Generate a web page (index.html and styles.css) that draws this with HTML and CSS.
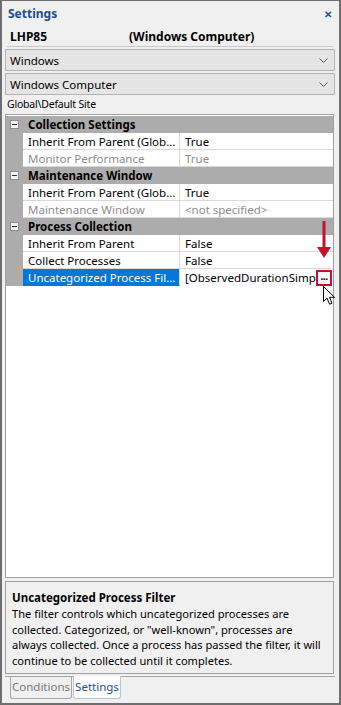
FILE: index.html
```html
<!DOCTYPE html>
<html lang="en">
<head>
  <meta charset="UTF-8" />
  <title>Settings</title>
  <link rel="stylesheet" href="styles.css">
</head>
<body>
  <div class="window">
    <div class="title-bar">
      <span class="title">Settings</span>
      <span class="close">&#x2715;</span>
    </div>

    <div class="object-row">
      <span class="object-name">LHP85</span>
      <span class="object-type">(Windows Computer)</span>
    </div>

    <div class="combo">
      <span>Windows</span>
      <svg class="chevron" width="9" height="5" viewBox="0 0 9 5"><path d="M0.5 0.5 L4.5 4.5 L8.5 0.5" fill="none" stroke="#555" stroke-width="1"/></svg>
    </div>
    <div class="combo">
      <span>Windows Computer</span>
      <svg class="chevron" width="9" height="5" viewBox="0 0 9 5"><path d="M0.5 0.5 L4.5 4.5 L8.5 0.5" fill="none" stroke="#555" stroke-width="1"/></svg>
    </div>

    <div class="site-path">Global\Default Site</div>

    <div class="prop-grid">
      <div class="category">
        <span class="toggle"></span>
        <span class="cat-name">Collection Settings</span>
      </div>
      <div class="prop">
        <span class="gutter"></span>
        <span class="name">Inherit From Parent (Glob...</span>
        <span class="value">True</span>
      </div>
      <div class="prop disabled">
        <span class="gutter"></span>
        <span class="name">Monitor Performance</span>
        <span class="value">True</span>
      </div>

      <div class="category">
        <span class="toggle"></span>
        <span class="cat-name">Maintenance Window</span>
      </div>
      <div class="prop">
        <span class="gutter"></span>
        <span class="name">Inherit From Parent (Glob...</span>
        <span class="value">True</span>
      </div>
      <div class="prop disabled">
        <span class="gutter"></span>
        <span class="name">Maintenance Window</span>
        <span class="value">&lt;not specified&gt;</span>
      </div>

      <div class="category">
        <span class="toggle"></span>
        <span class="cat-name">Process Collection</span>
      </div>
      <div class="prop">
        <span class="gutter"></span>
        <span class="name">Inherit From Parent</span>
        <span class="value">False</span>
      </div>
      <div class="prop">
        <span class="gutter"></span>
        <span class="name">Collect Processes</span>
        <span class="value">False</span>
      </div>
      <div class="prop selected">
        <span class="gutter"></span>
        <span class="name">Uncategorized Process Fil...</span>
        <span class="value">
          <span class="value-text">[ObservedDurationSimple</span>
          <span class="ellipsis-btn">...</span>
        </span>
      </div>

      <!-- callout arrow and mouse pointer drawn over the grid -->
      <svg class="callout" width="14" height="38" viewBox="0 0 14 38">
        <rect x="5.5" y="0" width="3" height="28" fill="#c8102e"/>
        <path d="M0 26 L14 26 L7 37 Z" fill="#c8102e"/>
      </svg>
      <svg class="pointer" width="13" height="19" viewBox="0 0 13 19">
        <path d="M0.5 0.5 L0.5 15.5 L4 12.2 L6.6 18.2 L9 17.2 L6.5 11.3 L11.5 11.3 Z" fill="#fff" stroke="#000" stroke-width="1" stroke-linejoin="round"/>
      </svg>
    </div>

    <div class="info">
      <div class="info-title">Uncategorized Process Filter</div>
      <p class="info-text">The filter controls which uncategorized processes are collected. Categorized, or "well-known", processes are always collected. Once a process has passed the filter, it will continue to be collected until it completes.</p>
    </div>

    <div class="tabs">
      <span class="tab">Conditions</span>
      <span class="tab active">Settings</span>
    </div>
  </div>
</body>
</html>
```

FILE: styles.css
```css
:root {
  --panel: #f0f0f0;
  --frame: #6e6e6e;
  --line: #a0a0a0;
  --cell-line: #d9d9d9;
  --cat: #acacac;
  --blue-title: #1c4f8f;
  --select: #0078d7;
  --red: #c8102e;
}
* {
  box-sizing: border-box;
}
body {
  margin: 0;
  font-family: 'Noto Sans', 'Open Sans', sans-serif;
  font-size: 11px;
  color: #000;
}
.window {
  width: 341px;
  height: 705px;
  border: 2px solid var(--frame);
  border-top-width: 1px;
  background: var(--panel);
  display: flex;
  flex-direction: column;
  padding: 0 4px 1px 3px;
}
.title-bar {
  display: flex;
  justify-content: space-between;
  align-items: center;
  height: 25px;
  padding: 0 3px 0 3px;
}
.title {
  font-weight: bold;
  font-size: 12px;
  color: var(--blue-title);
}
.close {
  font-size: 10px;
  font-weight: bold;
  color: var(--blue-title);
}
.object-row {
  display: flex;
  height: 21px;
  align-items: center;
  margin: 0 2px;
  padding-left: 3px;
  font-weight: bold;
  font-size: 12px;
  border-bottom: 1px solid #c8c8c8;
}
.object-name {
  width: 119px;
}
.combo {
  display: flex;
  justify-content: space-between;
  align-items: center;
  height: 22px;
  margin-top: 2px;
  padding: 0 6px 0 4px;
  background: #e5e5e5;
  border: 1px solid #b4b4b4;
  font-size: 11.5px;
}
.site-path {
  height: 19px;
  line-height: 19px;
  padding-left: 2px;
  font-size: 10.5px;
  letter-spacing: -0.2px;
}
.prop-grid {
  position: relative;
  flex: 1;
  background: #fff;
  border: 1px solid var(--line);
  margin-right: 1px;
  padding-top: 1px;
}
.category {
  display: flex;
  align-items: center;
  height: 17px;
  background: var(--cat);
  font-weight: bold;
  font-size: 11.5px;
}
.toggle {
  position: relative;
  width: 9px;
  height: 9px;
  margin: 0 9px 0 4px;
  background: #f4f4f4;
  border: 1px solid #8c8c8c;
}
.toggle::after {
  content: "";
  position: absolute;
  left: 1px;
  top: 3px;
  width: 5px;
  height: 1px;
  background: #333;
}
.prop {
  display: grid;
  grid-template-columns: 17px 157px 1fr;
  height: 17px;
  font-size: 11.5px;
}
.gutter {
  background: var(--cat);
}
.prop .name,
.prop .value {
  display: flex;
  align-items: center;
  overflow: hidden;
  white-space: nowrap;
  border-bottom: 1px solid var(--cell-line);
}
.prop .name {
  padding-left: 5px;
  border-right: 1px solid var(--cell-line);
}
.prop .value {
  padding-left: 5px;
}
.prop.disabled {
  color: #8d8d8d;
}
.prop.selected .name {
  background: var(--select);
  color: #fff;
  border-bottom-color: var(--select);
}
.prop.selected .value {
  padding-right: 1px;
  border-bottom: none;
}
.value-text {
  flex: 1;
  overflow: hidden;
  text-overflow: clip;
}
.ellipsis-btn {
  flex: none;
  width: 16px;
  height: 16px;
  border: 2px solid var(--red);
  background: #f7f7f7;
  font-size: 10px;
  font-weight: bold;
  line-height: 8px;
  text-align: center;
  letter-spacing: -0.5px;
}
.callout {
  position: absolute;
  left: 311px;
  top: 106px;
}
.pointer {
  position: absolute;
  left: 317px;
  top: 171px;
}
.info {
  height: 93px;
  margin-top: 3px;
  margin-right: 1px;
  padding: 8px 6px 0 6px;
  border: 1px solid var(--line);
}
.info-title {
  font-weight: bold;
  font-size: 11.5px;
  line-height: 15px;
}
.info-text {
  margin: 1px 0 0;
  font-size: 11.1px;
  line-height: 15.5px;
}
.tabs {
  display: flex;
  gap: 1px;
  margin-top: 2px;
  padding-left: 5px;
  border-top: 1px solid #a8a8a8;
  height: 26px;
}
.tab {
  height: 23px;
  line-height: 21px;
  padding: 0 1px;
  margin-top: -1px;
  border: 1px solid #a8a8a8;
  border-top: none;
  border-radius: 0 0 3px 3px;
  color: #777;
  font-size: 11.5px;
}
.tab.active {
  background: #fff;
  border-color: #b8c4d8;
  color: var(--blue-title);
}
```
